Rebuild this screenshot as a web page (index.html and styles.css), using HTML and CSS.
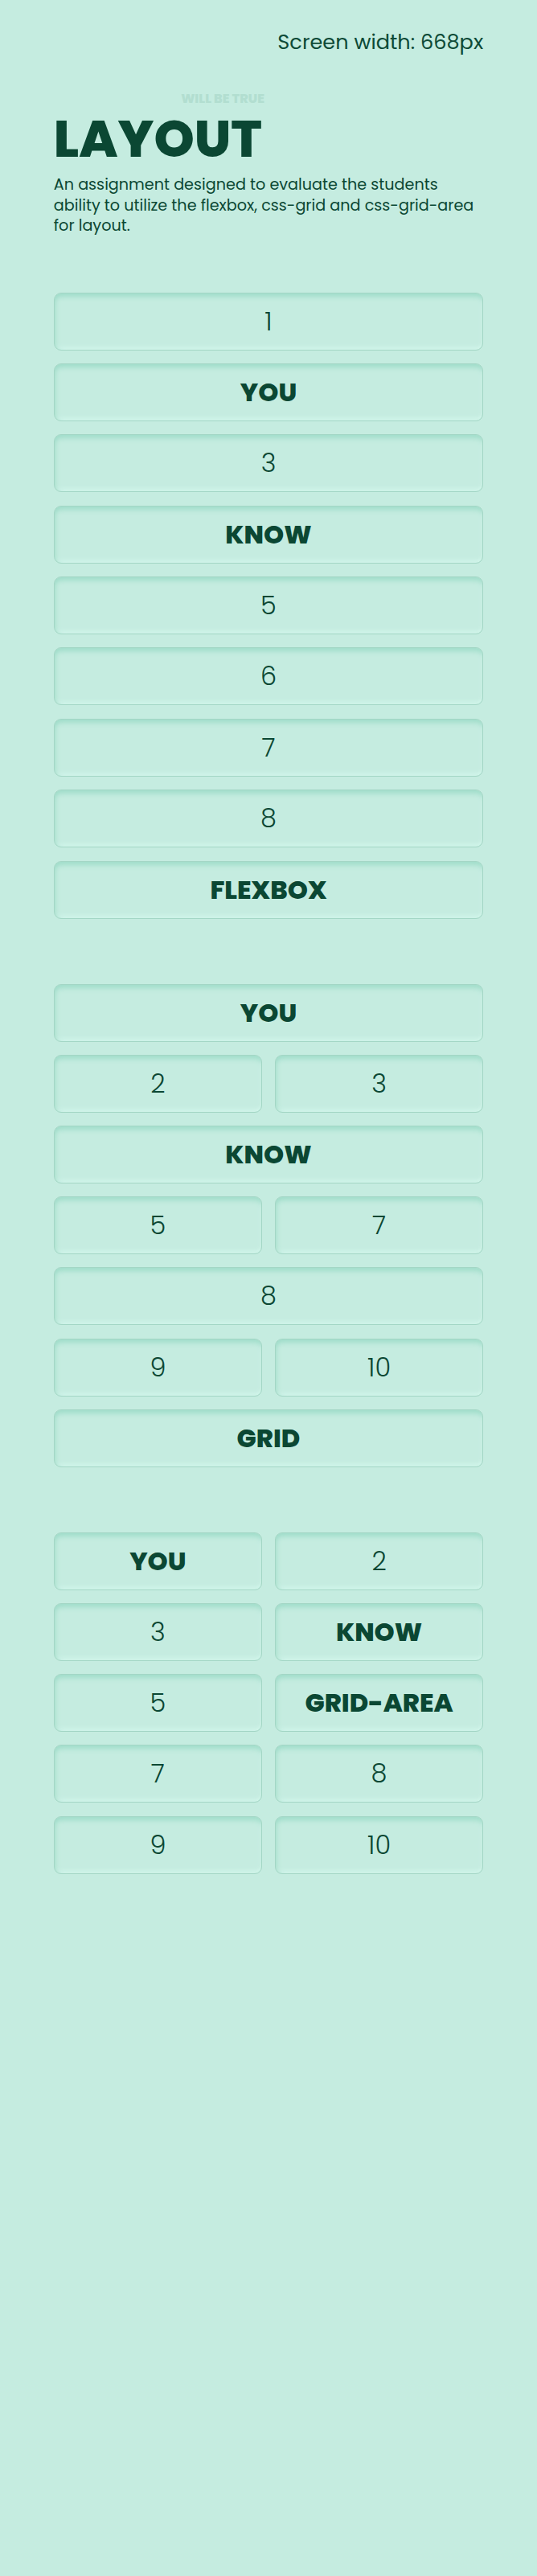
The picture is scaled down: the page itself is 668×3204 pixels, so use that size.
FILE: index.html
```html
<!DOCTYPE html>
<html lang="en">
<head>
<meta charset="utf-8">
<title>Layout</title>
<link rel="stylesheet" href="styles.css">
</head>
<body>
<div class="container">
  <header class="top">
    <p class="screen">Screen width: 668px</p>
  </header>
  <section class="intro">
    <div class="title-wrap">
      <span class="tag">WILL BE TRUE</span>
      <h1 class="title">LAYOUT</h1>
    </div>
    <p class="desc">An assignment designed to evaluate the students ability to utilize the flexbox, css-grid and css-grid-area for layout.</p>
  </section>

  <section class="flexbox">
    <div class="box">1</div>
    <div class="box word">YOU</div>
    <div class="box">3</div>
    <div class="box word">KNOW</div>
    <div class="box">5</div>
    <div class="box">6</div>
    <div class="box">7</div>
    <div class="box">8</div>
    <div class="box word">FLEXBOX</div>
  </section>

  <section class="grid">
    <div class="box word span">YOU</div>
    <div class="box">2</div>
    <div class="box">3</div>
    <div class="box word span">KNOW</div>
    <div class="box">5</div>
    <div class="box">7</div>
    <div class="box span">8</div>
    <div class="box">9</div>
    <div class="box">10</div>
    <div class="box word span">GRID</div>
  </section>

  <section class="area">
    <div class="box word a-you">YOU</div>
    <div class="box a-2">2</div>
    <div class="box a-3">3</div>
    <div class="box word a-know">KNOW</div>
    <div class="box a-5">5</div>
    <div class="box word a-ga">GRID-AREA</div>
    <div class="box a-7">7</div>
    <div class="box a-8">8</div>
    <div class="box a-9">9</div>
    <div class="box a-10">10</div>
  </section>
</div>
</body>
</html>
```

FILE: styles.css
```css
html {
  background: #c5ece0;
}
body {
  margin: 0;
  background: #c5ece0;
  color: #0b4733;
  font-family: "Poppins", Inter, "Noto Sans", sans-serif;
}
.container {
  width: 80%;
  margin: 0 auto;
  padding-bottom: 80px;
}
.top {
  padding-top: 36px;
  display: flex;
  justify-content: flex-end;
}
.screen {
  margin: 0;
  font-size: 25.6px;
  font-weight: 400;
  line-height: 32px;
  color: #0d4a37;
}
.intro {
  margin-top: 42px;
}
.title-wrap {
  display: inline-flex;
  flex-direction: column;
  align-items: flex-end;
}
.tag {
  font-size: 16px;
  font-weight: 800;
  line-height: 20px;
  color: #b2ded0;
  letter-spacing: 0;
  margin-right: -3px;
}
.title {
  margin: 4px 0 0;
  font-size: 64px;
  font-weight: 800;
  line-height: 72px;
  letter-spacing: 0;
}
.desc {
  margin: 8px 0 0;
  font-size: 19.2px;
  line-height: 25.5px;
  font-weight: 400;
}
.box {
  box-sizing: border-box;
  height: 72px;
  display: flex;
  align-items: center;
  justify-content: center;
  background: #c5ece0;
  border: 1px solid #a3d6c5;
  border-radius: 9px;
  box-shadow:
    inset 0 8px 6px -4px #a0ddca,
    inset 5px 0 6px -4px #a7dfcc,
    inset 0 -7px 5px -4px #d3f6ec,
    inset -4px 0 5px -4px #d0f3e8;
  font-size: 32px;
  font-weight: 300;
  line-height: 1;
}
.box.word {
  font-weight: 800;
}
.flexbox {
  margin-top: 70px;
  display: flex;
  flex-direction: column;
  gap: 16.4px;
}
.grid {
  margin-top: 81px;
  display: grid;
  grid-template-columns: 1fr 1fr;
  gap: 16.2px 16px;
}
.grid .span {
  grid-column: 1 / -1;
}
.area {
  margin-top: 81px;
  display: grid;
  grid-template-columns: 1fr 1fr;
  grid-template-areas:
    "you two"
    "three know"
    "five ga"
    "seven eight"
    "nine ten";
  gap: 16.2px 16px;
}
.a-you { grid-area: you; }
.a-2 { grid-area: two; }
.a-3 { grid-area: three; }
.a-know { grid-area: know; }
.a-5 { grid-area: five; }
.a-ga { grid-area: ga; }
.a-7 { grid-area: seven; }
.a-8 { grid-area: eight; }
.a-9 { grid-area: nine; }
.a-10 { grid-area: ten; }
```
